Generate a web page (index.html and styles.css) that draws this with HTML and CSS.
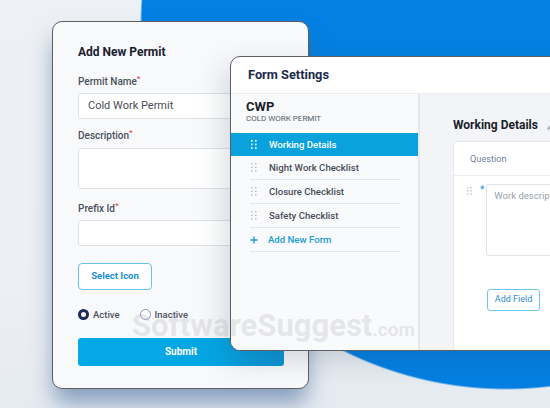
FILE: index.html
```html
<!DOCTYPE html>
<html>
<head>
<meta charset="utf-8">
<link rel="stylesheet" href="styles.css">
</head>
<body>
<div class="stage">
  <div class="card permit">
    <h2 class="permit-title">Add New Permit</h2>
    <div class="label l-first">Permit Name<span class="req">*</span></div>
    <div class="input">Cold Work Permit</div>
    <div class="label l-desc">Description<span class="req">*</span></div>
    <div class="textarea"></div>
    <div class="label l-prefix">Prefix Id<span class="req">*</span></div>
    <div class="input"></div>
    <div class="select-btn">Select Icon</div>
    <div class="radios">
      <span class="radio on"></span><span class="radio-label first">Active</span>
      <span class="radio off"></span><span class="radio-label">Inactive</span>
    </div>
    <div class="submit">Submit</div>
  </div>

  <div class="card settings">
    <div class="settings-head">Form Settings</div>
    <div class="settings-body">
      <div class="sidebar">
        <div class="cwp">CWP</div>
        <div class="cwp-sub">COLD WORK PERMIT</div>
        <div class="item active">
          <svg class="dots" width="6" height="9" viewBox="0 0 6 9"><g fill="#fff"><rect x="0" y="0" width="1.6" height="1.6"/><rect x="4" y="0" width="1.6" height="1.6"/><rect x="0" y="3.6" width="1.6" height="1.6"/><rect x="4" y="3.6" width="1.6" height="1.6"/><rect x="0" y="7.2" width="1.6" height="1.6"/><rect x="4" y="7.2" width="1.6" height="1.6"/></g></svg>
          <span>Working Details</span>
        </div>
        <div class="item">
          <svg class="dots" width="6" height="9" viewBox="0 0 6 9"><g fill="#c3c8cf"><rect x="0" y="0" width="1.6" height="1.6"/><rect x="4" y="0" width="1.6" height="1.6"/><rect x="0" y="3.6" width="1.6" height="1.6"/><rect x="4" y="3.6" width="1.6" height="1.6"/><rect x="0" y="7.2" width="1.6" height="1.6"/><rect x="4" y="7.2" width="1.6" height="1.6"/></g></svg>
          <span>Night Work Checklist</span>
        </div>
        <div class="item">
          <svg class="dots" width="6" height="9" viewBox="0 0 6 9"><g fill="#c3c8cf"><rect x="0" y="0" width="1.6" height="1.6"/><rect x="4" y="0" width="1.6" height="1.6"/><rect x="0" y="3.6" width="1.6" height="1.6"/><rect x="4" y="3.6" width="1.6" height="1.6"/><rect x="0" y="7.2" width="1.6" height="1.6"/><rect x="4" y="7.2" width="1.6" height="1.6"/></g></svg>
          <span>Closure Checklist</span>
        </div>
        <div class="item">
          <svg class="dots" width="6" height="9" viewBox="0 0 6 9"><g fill="#c3c8cf"><rect x="0" y="0" width="1.6" height="1.6"/><rect x="4" y="0" width="1.6" height="1.6"/><rect x="0" y="3.6" width="1.6" height="1.6"/><rect x="4" y="3.6" width="1.6" height="1.6"/><rect x="0" y="7.2" width="1.6" height="1.6"/><rect x="4" y="7.2" width="1.6" height="1.6"/></g></svg>
          <span>Safety Checklist</span>
        </div>
        <div class="item add">
          <svg class="plus" width="8" height="8" viewBox="0 0 8 8"><path d="M4 0.5V7.5M0.5 4H7.5" stroke="#1b9ad8" stroke-width="1.3"/></svg>
          <span>Add New Form</span>
        </div>
      </div>
      <div class="main">
        <div class="main-title">Working Details<svg class="pencil" width="8" height="8" viewBox="0 0 8 8"><path d="M1 7L1.5 5L5.5 1L7 2.5L3 6.5Z" fill="#a9b0ba"/></svg></div>
        <div class="qcard">
          <div class="qhead">Question</div>
          <div class="qrow">
            <svg class="qdots" width="5" height="8" viewBox="0 0 5 8"><g fill="#b8c0cc"><rect x="0" y="0" width="1.4" height="1.4"/><rect x="3.4" y="0" width="1.4" height="1.4"/><rect x="0" y="3.2" width="1.4" height="1.4"/><rect x="3.4" y="3.2" width="1.4" height="1.4"/><rect x="0" y="6.4" width="1.4" height="1.4"/><rect x="3.4" y="6.4" width="1.4" height="1.4"/></g></svg>
            <span class="qstar">*</span>
            <div class="qtext">Work description</div>
          </div>
          <div class="addfield">Add Field</div>
        </div>
      </div>
    </div>
  </div>
</div>
<div class="watermark">SoftwareSuggest<span class="wm-com">.com</span></div>
</body>
</html>
```

FILE: styles.css
```css
* { box-sizing: border-box; }
html, body { margin: 0; padding: 0; }
body {
  width: 550px;
  height: 408px;
  overflow: hidden;
  position: relative;
  font-family: Roboto, "Liberation Sans", sans-serif;
  background:
    radial-gradient(circle 366px at 506px 24px, #0380e2 0, #0380e2 364px, rgba(3,128,226,0) 366px),
    linear-gradient(180deg, #edf0f4 0%, #eceff3 70%, #e6ebf1 100%);
}
.stage {
  display: grid;
  grid-template-columns: 52px 178px 79px 1fr;
  grid-template-rows: 21px 35px 295px 38px;
}
.card {
  border: 1px solid #5f5f63;
  border-radius: 10px;
  overflow: hidden;
}
.permit {
  grid-column: 2 / 4;
  grid-row: 2 / 5;
  background: #f8f9fb;
  padding: 0 24px 0 25px;
  display: flex;
  flex-direction: column;
  box-shadow: 0 16px 22px -2px rgba(70, 105, 155, 0.6);
}
.permit-title {
  margin: 22px 0 0;
  font-size: 12px;
  line-height: 16px;
  font-weight: 700;
  color: #1a2030;
}
.label {
  font-size: 10px;
  line-height: 14px;
  height: 14px;
  color: #4b505c;
  font-weight: 500;
}
.req { color: #e5484d; font-size: 8px; line-height: 0; position: relative; top: -4px; }
.l-first { margin-top: 15px; }
.l-desc { margin-top: 10px; }
.l-prefix { margin-top: 13px; }
.input {
  margin-top: 4px;
  height: 26px;
  width: 206px;
  border: 1px solid #dde1e6;
  border-radius: 3px;
  background: #fff;
  padding-left: 9px;
  font-size: 11px;
  line-height: 24px;
  color: #4a4d55;
}
.textarea {
  margin-top: 5px;
  height: 41px;
  width: 206px;
  border: 1px solid #dde1e6;
  border-radius: 3px;
  background: #fff;
}
.select-btn {
  margin-top: 17px;
  width: 74px;
  height: 27px;
  border: 1.5px solid #63c3ea;
  border-radius: 4px;
  background: #fff;
  font-size: 9.5px;
  font-weight: 700;
  color: #1d8fcf;
  text-align: center;
  line-height: 24px;
}
.radios {
  margin-top: 17px;
  height: 14px;
  display: flex;
  align-items: center;
}
.radio {
  display: inline-block;
  border-radius: 50%;
  background: #fff;
  flex: none;
}
.radio.on { width: 11px; height: 11px; border: 3.5px solid #1d2a5c; }
.radio.off { width: 11px; height: 11px; border: 1px solid #8797b3; }
.radio-label {
  font-size: 9.5px;
  color: #4b505c;
  margin-left: 4px;
  font-weight: 500;
}
.radio-label.first { margin-right: 20px; }
.submit {
  margin-top: 17px;
  width: 206px;
  height: 28px;
  border-radius: 3px;
  background: linear-gradient(90deg, #05a9e6 0%, #05a5e3 70%, #0b93d2 100%);
  color: #fff;
  font-size: 10px;
  font-weight: 700;
  text-align: center;
  line-height: 28px;
}

.settings {
  grid-column: 3 / 5;
  grid-row: 3 / 4;
  width: 360px;
  background: #fff;
  display: flex;
  flex-direction: column;
  box-shadow: -6px 10px 28px rgba(40, 60, 90, 0.18);
}
.settings-head {
  height: 37px;
  flex: none;
  padding-left: 17px;
  font-size: 12.8px;
  font-weight: 700;
  color: #1c2b4b;
  line-height: 35px;
  border-bottom: 1px solid #eceef1;
}
.settings-body {
  flex: 1;
  display: flex;
}
.sidebar {
  width: 189px;
  flex: none;
  background: #f9fafc;
  border-right: 2px solid #e4e7eb;
}
.cwp {
  margin-top: 6px;
  padding-left: 15px;
  font-size: 13px;
  font-weight: 700;
  line-height: 14px;
  color: #1a1f2b;
}
.cwp-sub {
  padding-left: 15px;
  font-size: 8px;
  line-height: 10px;
  color: #555a63;
}
.item {
  height: 24px;
  margin: 0 18px 0 19px;
  display: flex;
  align-items: center;
  border-bottom: 1px solid #e4e7ea;
  font-size: 9.6px;
  color: #474c56;
  font-weight: 500;
}
.item .dots { margin-left: 1px; margin-right: 12px; flex: none; }
.item.active {
  margin: 9px 0 0 0;
  height: 23px;
  padding-left: 19px;
  background: #0aa2dd;
  border-bottom: none;
  color: #fff;
}
.item.add { color: #1b9ad8; }
.item .plus { margin-right: 10px; }
.main {
  flex: 1;
  background: #f3f4f7;
  padding: 23px 0 0 33px;
  display: flex;
  flex-direction: column;
}
.main-title {
  font-size: 12px;
  font-weight: 700;
  color: #1a1f2b;
  line-height: 16px;
  white-space: nowrap;
}
.pencil { margin-left: 8px; vertical-align: -2px; }
.qcard {
  margin-top: 8px;
  flex: 1;
  background: #fff;
  border: 1px solid #e6e8ec;
  border-right: none;
  border-bottom: none;
  border-radius: 4px 0 0 0;
}
.qhead {
  height: 34px;
  padding-left: 16px;
  font-size: 9.2px;
  line-height: 33px;
  color: #7183a1;
  border-bottom: 1px solid #eceef1;
}
.qrow {
  display: flex;
  align-items: flex-start;
  padding: 8px 0 0 13px;
}
.qdots { margin-top: 3px; flex: none; }
.qstar { color: #1b8fe0; font-size: 10px; margin-left: 8px; line-height: 12px; }
.qtext {
  margin-left: 2px;
  width: 120px;
  height: 72px;
  border: 1px solid #dfe3e8;
  border-radius: 2px;
  padding: 5px 0 0 7px;
  font-size: 9.5px;
  color: #9a9ea6;
  white-space: nowrap;
  overflow: hidden;
}
.addfield {
  margin: 33px 0 0 33px;
  width: 53px;
  height: 22px;
  border: 1.5px solid #6cc6ec;
  border-radius: 3px;
  font-size: 9px;
  color: #2a8ccc;
  text-align: center;
  line-height: 19px;
}
.watermark {
  position: absolute;
  left: 132px;
  top: 307px;
  font-family: Roboto, "Liberation Sans", sans-serif;
  font-size: 31px;
  font-weight: 700;
  color: rgba(160, 160, 165, 0.24);
  white-space: nowrap;
  pointer-events: none;
}
.wm-com { font-size: 19px; font-weight: 700; }
```
